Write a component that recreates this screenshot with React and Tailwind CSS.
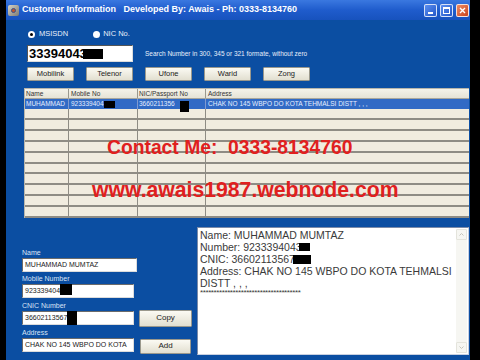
const Btn = ({ children, className = "" }) => (
  <div
    className={
      "flex items-center justify-center h-[14px] bg-gradient-to-b from-[#fbfaf3] to-[#e2dfd0] border border-[#9a988c] rounded-[1px] text-[7.5px] text-[#222] " +
      className
    }
  >
    {children}
  </div>
);

const Field = ({ children, className = "" }) => (
  <div
    className={
      "flex items-center h-[14px] bg-white border border-t-[#6b6b6b] border-l-[#6b6b6b] border-r-[#dcdcdc] border-b-[#dcdcdc] pl-[2px] text-[7px] text-[#222] whitespace-nowrap " +
      className
    }
  >
    {children}
  </div>
);

const Label = ({ children, className = "" }) => (
  <div className={"h-[9px] leading-[9px] text-[7px] text-[#d9e4f6] " + className}>{children}</div>
);

function GridRow() {
  return (
    <div className="flex h-[11px] border-b-[2px] border-[#8e8c84] bg-[#f0ecdf]">
      <div className="w-[44px] border-r border-[#8e8c84]" />
      <div className="w-[69px] border-r border-[#8e8c84]" />
      <div className="w-[68px] border-r border-[#8e8c84]" />
      <div className="flex-1" />
    </div>
  );
}

export default function App() {
  return (
    <div className="w-[480px] h-[360px] bg-black overflow-hidden flex font-['Liberation_Sans',Arial,sans-serif]">
      <div className="ml-[6px] w-[464px] h-full flex flex-col">
        {/* Title bar */}
        <div className="h-[20px] flex items-center bg-gradient-to-b from-[#3a78e0] via-[#1f5ccc] to-[#1752bd]">
          <div className="ml-[2px] w-[11px] h-[11px] rounded-[2px] bg-gradient-to-br from-[#d8d4c8] to-[#7d7b74] flex items-center justify-center">
            <div className="w-[5px] h-[5px] rounded-full bg-[#c0562a] border border-[#3a4f8c]" />
          </div>
          <div className="ml-[3px] text-[9px] font-bold text-white whitespace-nowrap">
            Customer Information&nbsp;&nbsp; Developed By: Awais - Ph: 0333-8134760
          </div>
          <div className="ml-auto mr-[1px] flex gap-[3px]">
            <div className="w-[13px] h-[13px] rounded-[2px] border border-white/80 bg-gradient-to-br from-[#5b8ff0] to-[#2456c8] relative">
              <div className="absolute left-[3px] bottom-[2px] w-[5px] h-[2px] bg-white" />
            </div>
            <div className="w-[13px] h-[13px] rounded-[2px] border border-white/80 bg-gradient-to-br from-[#5b8ff0] to-[#2456c8] flex items-center justify-center">
              <div className="w-[7px] h-[7px] border border-white border-t-2" />
            </div>
            <div className="w-[13px] h-[13px] rounded-[2px] border border-white/80 bg-gradient-to-br from-[#ef8a62] to-[#c9431c] flex items-center justify-center">
              <svg width="7" height="7" viewBox="0 0 7 7">
                <path d="M1 1 L6 6 M6 1 L1 6" stroke="white" strokeWidth="1.4" />
              </svg>
            </div>
          </div>
        </div>

        {/* Body */}
        <div className="flex-1 relative bg-[#0b4ea2] flex flex-col">
          {/* radios */}
          <div className="flex items-center h-[10px] mt-[9px] ml-[22px] text-[7.5px] text-[#e8eefa]">
            <div className="w-[7px] h-[7px] rounded-full bg-white flex items-center justify-center">
              <div className="w-[3px] h-[3px] rounded-full bg-black" />
            </div>
            <span className="ml-[4px]">MSISDN</span>
            <div className="ml-[25px] w-[7px] h-[7px] rounded-full bg-white" />
            <span className="ml-[3px]">NIC No.</span>
          </div>

          {/* search input */}
          <div className="flex items-center mt-[6px] ml-[21px]">
            <div className="w-[106px] h-[17px] bg-white border border-t-[#555] border-l-[#555] border-r-[#ddd] border-b-[#ddd] flex items-center pl-[1px] overflow-hidden">
              <span className="text-[13px] font-bold text-black leading-none">33394043</span>
              <span className="inline-block w-[20px] h-[10px] bg-black -ml-[4px]" />
            </div>
            <span className="ml-[12px] text-[6.5px] text-[#e8eefa] whitespace-nowrap">
              Search Number in 300, 345 or 321 formate, without zero
            </span>
          </div>

          {/* buttons */}
          <div className="flex mt-[5px] ml-[21px] gap-[12px]">
            <Btn className="w-[47px]">Mobilink</Btn>
            <Btn className="w-[47px]">Telenor</Btn>
            <Btn className="w-[47px]">Ufone</Btn>
            <Btn className="w-[47px]">Warid</Btn>
            <Btn className="w-[47px]">Zong</Btn>
          </div>

          {/* grid */}
          <div className="mt-[7px] ml-[18px] w-[445px] h-[130px] border-l border-t border-[#b8b6ac] bg-[#f0ecdf] flex flex-col overflow-hidden">
            <div className="flex h-[10px] bg-gradient-to-b from-[#f5f3ea] to-[#e6e3d6] border-b border-[#a8a69c] text-[6.5px] text-[#333] leading-[9px]">
              <div className="w-[44px] border-r border-[#9a988e] pl-[1px]">Name</div>
              <div className="w-[69px] border-r border-[#9a988e] pl-[2px]">Mobile No</div>
              <div className="w-[68px] border-r border-[#9a988e] pl-[1px]">NIC/Passport No</div>
              <div className="flex-1 pl-[2px]">Address</div>
            </div>
            <div className="flex h-[10px] bg-[#316ac5] text-[6.5px] text-[#e6eeff] items-center whitespace-nowrap">
              <div className="w-[44px] border-r border-[#7f9ad0] pl-[1px] overflow-hidden">MUHAMMAD</div>
              <div className="w-[69px] border-r border-[#7f9ad0] pl-[2px] flex items-center">
                <span>923339404</span>
                <span className="inline-block w-[11px] h-[7px] bg-black" />
              </div>
              <div className="w-[68px] border-r border-[#7f9ad0] pl-[1px] flex items-center h-full">
                <span>3660211356</span>
                <span className="inline-block ml-[5px] w-[9px] h-[11px] bg-black translate-y-[2px]" />
              </div>
              <div className="flex-1 pl-[2px]">CHAK NO 145 WBPO DO KOTA TEHMALSI DISTT , , ,</div>
            </div>
            {Array.from({ length: 10 }).map((_, i) => (
              <GridRow key={i} />
            ))}
          </div>

          {/* bottom section */}
          <div className="flex mt-[9px]">
            <div className="ml-[16px] w-[170px] pt-[21px] flex flex-col">
              <Label>Name</Label>
              <Field className="mt-[1px] w-[115px]">MUHAMMAD MUMTAZ</Field>
              <Label className="mt-[2px]">Mobile Number</Label>
              <Field className="mt-[1px] w-[112px] overflow-visible">
                <span>923339404</span>
                <span className="inline-block w-[12px] h-[11px] bg-black -translate-y-[2px]" />
              </Field>
              <Label className="mt-[3px]">CNIC Number</Label>
              <div className="mt-[1px] flex items-center h-[14px]">
                <Field className="w-[112px]">
                  <span>36602113567</span>
                  <span className="inline-block w-[10px] h-[14px] bg-black" />
                </Field>
                <Btn className="ml-[5px] w-[53px] h-[17px] text-[8px]">Copy</Btn>
              </div>
              <Label className="mt-[3px]">Address</Label>
              <div className="mt-[1px] flex items-center h-[14px]">
                <Field className="w-[112px]">CHAK NO 145 WBPO DO KOTA</Field>
                <Btn className="ml-[6px] w-[51px] h-[15px] border-[#2b2b2b] text-[8px] translate-y-[1px]">Add</Btn>
              </div>
            </div>

            <div className="ml-[5px] w-[272px] h-[128px] bg-white border border-t-[#7a8aa8] border-l-[#7a8aa8] border-r-[#c8d0e0] border-b-[#c8d0e0] flex">
              <div className="flex-1 pl-[2px] pt-[1px] text-[10.5px] leading-[12px] text-[#3a3a3a] whitespace-nowrap">
                <div>Name: MUHAMMAD MUMTAZ</div>
                <div className="flex items-center">
                  <span>Number: 9233394043</span>
                  <span className="inline-block w-[11px] h-[8px] bg-black -ml-[3px]" />
                </div>
                <div className="flex items-center">
                  <span>CNIC: 36602113567</span>
                  <span className="inline-block w-[18px] h-[9px] bg-black -ml-[2px]" />
                </div>
                <div>Address: CHAK NO 145 WBPO DO KOTA TEHMALSI</div>
                <div>DISTT , , ,</div>
                <div className="text-[8px] leading-[8px] tracking-[-0.4px]">*************************************</div>
              </div>
              <div className="w-[11px] mr-[1px] my-[1px] bg-[#f6f6f2] flex flex-col justify-between">
                <div className="h-[11px] flex items-center justify-center border border-[#e4e4dc] rounded-[1px]">
                  <svg width="5" height="3" viewBox="0 0 5 3">
                    <path d="M0.5 2.5 L2.5 0.5 L4.5 2.5" stroke="#c4c4bc" fill="none" strokeWidth="1" />
                  </svg>
                </div>
                <div className="h-[11px] flex items-center justify-center border border-[#e4e4dc] rounded-[1px]">
                  <svg width="5" height="3" viewBox="0 0 5 3">
                    <path d="M0.5 0.5 L2.5 2.5 L4.5 0.5" stroke="#c4c4bc" fill="none" strokeWidth="1" />
                  </svg>
                </div>
              </div>
            </div>
          </div>

          {/* overlay watermark text */}
          <div className="absolute left-[101px] top-[118px] text-[19.3px] leading-[20px] font-bold text-[#e0201e] whitespace-pre">
            {"Contact Me:  0333-8134760"}
          </div>
          <div className="absolute left-[86px] top-[159px] text-[21.2px] leading-[21px] font-bold text-[#e0201e] whitespace-nowrap">
            www.awais1987.webnode.com
          </div>
        </div>
      </div>
    </div>
  );
}
